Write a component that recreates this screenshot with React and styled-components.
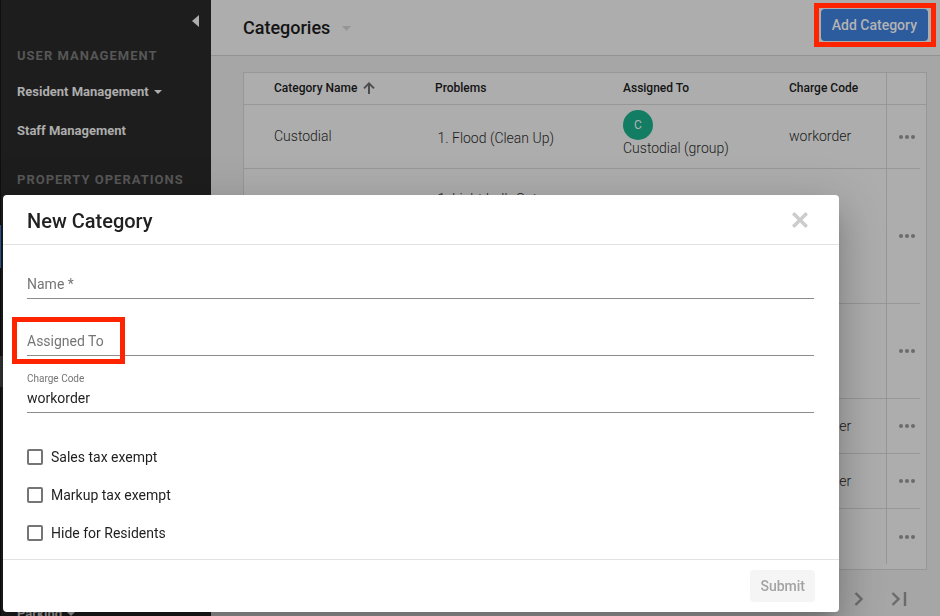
import React from "react";
import styled, { createGlobalStyle } from "styled-components";

const GlobalStyle = createGlobalStyle`
  *, *::before, *::after { box-sizing: border-box; }
  body {
    margin: 0;
    background: #a6a6a6;
    color: #1a1a1a;
    font-family: Roboto, "Liberation Sans", sans-serif;
    font-size: 14px;
    line-height: 20px;
  }
  button, input { font: inherit; color: inherit; }
  button { cursor: pointer; }
`;

const Shell = styled.div`
  display: flex;
  height: 100vh;
  overflow: hidden;
`;

const Sidebar = styled.nav`
  flex: 0 0 211px;
  background: #1d1d1d;
  box-shadow: inset 1px 0 #0f0f0f;
`;

const SidebarTop = styled.div`
  display: flex;
  justify-content: flex-end;
  align-items: center;
  height: 41px;
  padding-right: 12px;
`;

const IconButton = styled.button`
  display: flex;
  align-items: center;
  justify-content: center;
  padding: 0;
  border: 0;
  background: none;
  color: ${(p) => p.$tone || "#6b6b6b"};
`;

const SectionTitle = styled.h2`
  margin: ${(p) => (p.$spaced ? "16px" : "1px")} 0 0;
  padding-left: 17px;
  color: #575757;
  font-size: 13px;
  font-weight: 700;
  line-height: 28px;
  letter-spacing: 1px;
  text-transform: uppercase;
`;

const NavList = styled.div`
  margin-top: 2px;
`;

const NavLink = styled.a`
  display: flex;
  align-items: center;
  gap: 5px;
  height: 39px;
  padding-left: 17px;
  color: #adadad;
  font-size: 13px;
  font-weight: 700;
  text-decoration: none;
`;

const NavMarker = styled.div`
  width: 3px;
  height: ${(p) => (p.$active ? 43 : 31)}px;
  margin-top: ${(p) => (p.$active ? 31 : 88)}px;
  background: ${(p) => (p.$active ? "none" : "#333")};
  border-left: ${(p) => (p.$active ? "1px solid #2b5ea5" : "0")};
`;

const NavBottom = styled.div`
  margin-top: 207px;
`;

const Main = styled.main`
  flex: 1;
  min-width: 0;
`;

const PageHeader = styled.header`
  display: flex;
  align-items: flex-start;
  justify-content: space-between;
  padding: 9px 12px 8px 32px;
  background: #adadad;
  border-bottom: 1px solid #939393;
`;

const TitleGroup = styled.div`
  display: flex;
  align-items: center;
  gap: 12px;
`;

const PageTitle = styled.h1`
  margin: 0;
  color: #141414;
  font-size: 18px;
  font-weight: 500;
  line-height: 38px;
`;

const Highlighted = styled.div`
  position: relative;
  display: flex;
`;

const HighlightFrame = styled.span`
  position: absolute;
  inset: ${(p) => p.$inset};
  width: ${(p) => p.$width || "auto"};
  border: 5px solid #fe2400;
  pointer-events: none;
`;

const Button = styled.button`
  height: 32px;
  padding: 0 ${(p) => (p.$primary ? "11px" : "10px")};
  border: 0;
  border-radius: 4px;
  background: ${(p) => (p.$primary ? "#2d5c9e" : "#f5f5f5")};
  color: ${(p) => (p.$primary ? "#b3b3b3" : "#a3a3a3")};
  font-weight: 500;
`;

const Panel = styled.section`
  margin: 16px 13px 0 32px;
  padding-bottom: 5px;
  background: #adadad;
  border: 1px solid #979797;
`;

const Table = styled.table`
  width: 100%;
  table-layout: fixed;
  border-collapse: separate;
  border-spacing: 0;
`;

const Col = styled.col`
  width: ${(p) => p.$w};
`;

const Th = styled.th`
  height: 32px;
  padding: 0 0 2px ${(p) => (p.$first ? "30px" : "0")};
  border-bottom: 1px solid #979797;
  border-left: ${(p) => (p.$divided ? "1px solid #979797" : "0")};
  color: #141414;
  font-size: 12px;
  font-weight: 500;
  text-align: left;
`;

const SortLabel = styled.span`
  display: flex;
  align-items: center;
  gap: 6px;
`;

const Row = styled.tr`
  height: ${(p) => p.$h}px;

  &:last-child > td { border-bottom: 0; }
`;

const Td = styled.td`
  padding: 0 0 ${(p) => (p.$raised ? "8px" : "1px")} ${(p) => (p.$first ? "30px" : "0")};
  border-bottom: ${(p) => (p.$plain ? "0" : "1px solid #979797")};
  font-weight: 300;
  vertical-align: ${(p) => (p.$top ? "top" : "middle")};
`;

const ActionTd = styled.td`
  padding: 0 0 0 12px;
  border-bottom: 1px solid #979797;
  border-left: 1px solid #979797;
`;

const Problems = styled.ol`
  margin: 0;
  padding: ${(p) => (p.$tall ? "20px" : "4px")} 0 0 17px;
`;

const Avatar = styled.div`
  display: flex;
  align-items: center;
  justify-content: center;
  width: 30px;
  height: 30px;
  border-radius: 50%;
  background: #127d63;
  color: #b3b3b3;
  font-size: 12px;
  font-weight: 400;
`;

const Assignee = styled.div`
  line-height: 16px;
`;

const Pager = styled.div`
  display: flex;
  justify-content: flex-end;
  gap: 27px;
  padding: 22px 33px 0 0;
`;

const Dialog = styled.form`
  position: fixed;
  top: 195px;
  left: 3px;
  right: 101px;
  border-radius: 4px;
  background: #fff;
  box-shadow:
    0 11px 15px -7px rgba(0, 0, 0, 0.2),
    0 24px 38px 3px rgba(0, 0, 0, 0.14),
    0 9px 46px 8px rgba(0, 0, 0, 0.12);
`;

const DialogHeader = styled.header`
  display: flex;
  align-items: center;
  justify-content: space-between;
  height: 50px;
  padding: 0 30px 0 24px;
  border-bottom: 1px solid #e2e2e2;
`;

const DialogTitle = styled.h2`
  margin: 0;
  padding-top: 3px;
  color: #212121;
  font-size: 20px;
  font-weight: 500;
  line-height: 24px;
`;

const DialogBody = styled.div`
  padding: 11px 25px 7px 24px;
`;

const FieldList = styled.div`
  display: grid;
  gap: 14px;
`;

const Field = styled.div`
  position: relative;
  display: grid;
  grid-template-rows: 16px 24px;
  padding-bottom: 2px;
  border-bottom: 1px solid #8c8c8c;
`;

const FieldLabel = styled.label`
  grid-area: ${(p) => (p.$floating ? "1 / 1" : "2 / 1")};
  color: #757575;
  font-size: ${(p) => (p.$floating ? "10px" : "14px")};
  line-height: ${(p) => (p.$floating ? "18px" : "24px")};
`;

const TextInput = styled.input`
  grid-area: 2 / 1;
  width: 100%;
  padding: 0;
  border: 0;
  outline: 0;
  background: transparent;
  color: #1f1f1f;
`;

const CheckList = styled.div`
  margin-top: 25px;
`;

const CheckLabel = styled.label`
  display: flex;
  align-items: center;
  gap: 8px;
  height: 38px;
  color: #1f1f1f;
`;

const CheckBox = styled.input`
  appearance: none;
  width: 16px;
  height: 16px;
  margin: 0;
  border: 2px solid #757575;
  border-radius: 2px;

  &:checked { background: #757575; }
`;

const DialogFooter = styled.footer`
  display: flex;
  justify-content: flex-end;
  padding: 10px 24px;
  border-top: 1px solid #e2e2e2;
`;

const Caret = ({ width, height, fill }) => (
  <svg width={width} height={height} viewBox="0 0 10 5" preserveAspectRatio="none" aria-hidden="true">
    <path d="M0 0h10L5 5z" fill={fill} />
  </svg>
);

const Dots = () => (
  <svg width="16" height="4" viewBox="0 0 16 4" fill="currentColor" aria-hidden="true">
    <circle cx="2" cy="2" r="2" />
    <circle cx="8" cy="2" r="2" />
    <circle cx="14" cy="2" r="2" />
  </svg>
);

const rows = [
  { h: 64, name: "Custodial", problem: "Flood (Clean Up)", group: "Custodial (group)", code: "workorder" },
  { h: 135, problem: "Light bulb Out" },
  { h: 95 },
  { h: 55, code: "workorder" },
  { h: 55, code: "workorder" },
  { h: 55 },
];

const fields = [
  { id: "name", label: "Name *" },
  { id: "assigned", label: "Assigned To", highlighted: true },
  { id: "charge", label: "Charge Code", value: "workorder" },
];

const options = ["Sales tax exempt", "Markup tax exempt", "Hide for Residents"];

function CategoryTable() {
  return (
    <Table>
      <colgroup>
        <Col $w="191px" />
        <Col $w="auto" />
        <Col $w="166px" />
        <Col $w="97px" />
        <Col $w="34px" />
        <Col $w="6px" />
      </colgroup>
      <thead>
        <tr>
          <Th $first>
            <SortLabel>
              Category Name
              <svg width="12" height="12" viewBox="0 0 12 12" fill="none" stroke="#4d4d4d" strokeWidth="2" aria-hidden="true">
                <path d="M6 12V2M1 6.4L6 1.4L11 6.4" />
              </svg>
            </SortLabel>
          </Th>
          <Th>Problems</Th>
          <Th>Assigned To</Th>
          <Th>Charge Code</Th>
          <Th $divided colSpan={2} />
        </tr>
      </thead>
      <tbody>
        {rows.map((row, i) => (
          <Row key={i} $h={row.h}>
            <Td $first>{row.name}</Td>
            <Td $top={i === 1}>
              {row.problem && (
                <Problems $tall={i === 1}>
                  <li>{row.problem}</li>
                </Problems>
              )}
            </Td>
            <Td $raised>
              {row.group && (
                <>
                  <Avatar>C</Avatar>
                  <Assignee>{row.group}</Assignee>
                </>
              )}
            </Td>
            <Td>{row.code}</Td>
            <ActionTd>
              <IconButton type="button" aria-label="Row actions">
                <Dots />
              </IconButton>
            </ActionTd>
            <Td $plain />
          </Row>
        ))}
      </tbody>
    </Table>
  );
}

function NewCategoryDialog() {
  return (
    <Dialog role="dialog" aria-labelledby="dialog-title" onSubmit={(e) => e.preventDefault()}>
      <DialogHeader>
        <DialogTitle id="dialog-title">New Category</DialogTitle>
        <IconButton type="button" aria-label="Close" $tone="#cccccc">
          <svg width="18" height="18" viewBox="0 0 18 18" stroke="currentColor" strokeWidth="3.4" aria-hidden="true">
            <path d="M2.2 2.2L15.8 15.8M15.8 2.2L2.2 15.8" />
          </svg>
        </IconButton>
      </DialogHeader>
      <DialogBody>
        <FieldList>
          {fields.map((f) => (
            <Field key={f.id}>
              <FieldLabel htmlFor={f.id} $floating={!!f.value}>{f.label}</FieldLabel>
              <TextInput id={f.id} defaultValue={f.value} />
              {f.highlighted && <HighlightFrame $inset="4px auto -9px -15px" $width="113px" />}
            </Field>
          ))}
        </FieldList>
        <CheckList>
          {options.map((text) => (
            <CheckLabel key={text}>
              <CheckBox type="checkbox" />
              {text}
            </CheckLabel>
          ))}
        </CheckList>
      </DialogBody>
      <DialogFooter>
        <Button type="submit" disabled>Submit</Button>
      </DialogFooter>
    </Dialog>
  );
}

export default function App() {
  return (
    <>
      <GlobalStyle />
      <Shell>
        <Sidebar>
          <SidebarTop>
            <IconButton type="button" aria-label="Collapse menu" $tone="#adadad">
              <svg width="7" height="12" viewBox="0 0 7 12" fill="currentColor" aria-hidden="true">
                <path d="M7 0v12L0 6z" />
              </svg>
            </IconButton>
          </SidebarTop>
          <SectionTitle>User Management</SectionTitle>
          <NavList>
            <NavLink href="#residents">
              Resident Management <Caret width="8" height="4" fill="#adadad" />
            </NavLink>
            <NavLink href="#staff">Staff Management</NavLink>
          </NavList>
          <SectionTitle $spaced>Property Operations</SectionTitle>
          <NavMarker $active />
          <NavMarker />
          <NavBottom>
            <NavLink href="#parking">
              Parking <Caret width="8" height="4" fill="#adadad" />
            </NavLink>
          </NavBottom>
        </Sidebar>
        <Main>
          <PageHeader>
            <TitleGroup>
              <PageTitle>Categories</PageTitle>
              <Caret width="9" height="5" fill="#959595" />
            </TitleGroup>
            <Highlighted>
              <Button type="button" $primary>Add Category</Button>
              <HighlightFrame $inset="-6px -8px -6px -7px" />
            </Highlighted>
          </PageHeader>
          <Panel>
            <CategoryTable />
          </Panel>
          <Pager>
            <IconButton type="button" aria-label="Next page">
              <svg width="10" height="14" viewBox="0 0 10 14" fill="none" stroke="currentColor" strokeWidth="2.4" aria-hidden="true">
                <path d="M1.5 1L7.5 7L1.5 13" />
              </svg>
            </IconButton>
            <IconButton type="button" aria-label="Last page">
              <svg width="16" height="14" viewBox="0 0 16 14" fill="none" stroke="currentColor" strokeWidth="2.4" aria-hidden="true">
                <path d="M1.5 1L7.5 7L1.5 13M14 0V14" />
              </svg>
            </IconButton>
          </Pager>
        </Main>
      </Shell>
      <NewCategoryDialog />
    </>
  );
}
